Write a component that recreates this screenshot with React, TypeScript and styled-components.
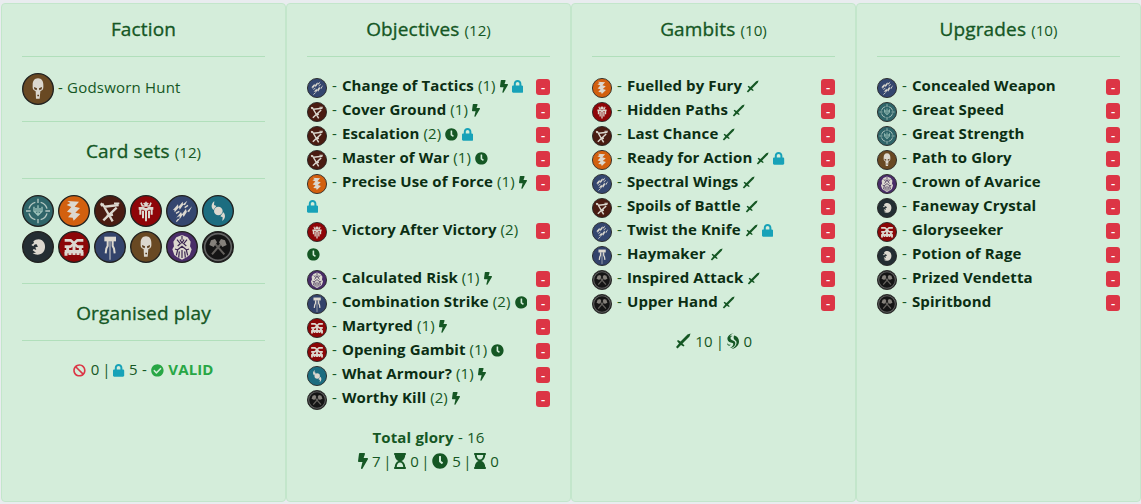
import React from 'react';
import styled, { createGlobalStyle } from 'styled-components';
import {
  FaBan,
  FaBolt,
  FaCheckCircle,
  FaClock,
  FaHourglassEnd,
  FaHourglassStart,
  FaLock,
} from 'react-icons/fa';

type EmblemName =
  | 'compass'
  | 'zigzag'
  | 'bones'
  | 'totem'
  | 'storm'
  | 'swirl'
  | 'moon'
  | 'ork'
  | 'squid'
  | 'skull'
  | 'beard'
  | 'axes';

type Mark = 'bolt' | 'clock' | 'sword' | 'lock';

interface Card {
  set: EmblemName;
  name: string;
  glory?: number;
  marks?: Mark[];
}

const cardSets: EmblemName[] = [
  'compass', 'zigzag', 'bones', 'totem', 'storm', 'swirl',
  'moon', 'ork', 'squid', 'skull', 'beard', 'axes',
];

const objectives: Card[] = [
  { set: 'storm', name: 'Change of Tactics', glory: 1, marks: ['bolt', 'lock'] },
  { set: 'bones', name: 'Cover Ground', glory: 1, marks: ['bolt'] },
  { set: 'bones', name: 'Escalation', glory: 2, marks: ['clock', 'lock'] },
  { set: 'bones', name: 'Master of War', glory: 1, marks: ['clock'] },
  { set: 'zigzag', name: 'Precise Use of Force', glory: 1, marks: ['bolt', 'lock'] },
  { set: 'totem', name: 'Victory After Victory', glory: 2, marks: ['clock'] },
  { set: 'beard', name: 'Calculated Risk', glory: 1, marks: ['bolt'] },
  { set: 'squid', name: 'Combination Strike', glory: 2, marks: ['clock'] },
  { set: 'ork', name: 'Martyred', glory: 1, marks: ['bolt'] },
  { set: 'ork', name: 'Opening Gambit', glory: 1, marks: ['clock'] },
  { set: 'swirl', name: 'What Armour?', glory: 1, marks: ['bolt'] },
  { set: 'axes', name: 'Worthy Kill', glory: 2, marks: ['bolt'] },
];

const gambits: Card[] = [
  { set: 'zigzag', name: 'Fuelled by Fury', marks: ['sword'] },
  { set: 'totem', name: 'Hidden Paths', marks: ['sword'] },
  { set: 'bones', name: 'Last Chance', marks: ['sword'] },
  { set: 'zigzag', name: 'Ready for Action', marks: ['sword', 'lock'] },
  { set: 'storm', name: 'Spectral Wings', marks: ['sword'] },
  { set: 'bones', name: 'Spoils of Battle', marks: ['sword'] },
  { set: 'storm', name: 'Twist the Knife', marks: ['sword', 'lock'] },
  { set: 'squid', name: 'Haymaker', marks: ['sword'] },
  { set: 'axes', name: 'Inspired Attack', marks: ['sword'] },
  { set: 'axes', name: 'Upper Hand', marks: ['sword'] },
];

const upgrades: Card[] = [
  { set: 'storm', name: 'Concealed Weapon' },
  { set: 'compass', name: 'Great Speed' },
  { set: 'compass', name: 'Great Strength' },
  { set: 'skull', name: 'Path to Glory' },
  { set: 'beard', name: 'Crown of Avarice' },
  { set: 'moon', name: 'Faneway Crystal' },
  { set: 'ork', name: 'Gloryseeker' },
  { set: 'moon', name: 'Potion of Rage' },
  { set: 'axes', name: 'Prized Vendetta' },
  { set: 'axes', name: 'Spiritbond' },
];

const bone = '#dcd8cf';

const emblems: Record<EmblemName, { fill: string; art: React.ReactNode }> = {
  compass: {
    fill: '#2f6569',
    art: (
      <g stroke="#b5c8c2" fill="none" strokeWidth="4">
        <path d="M40 22a27 27 0 0 0-19 19M56 22a27 27 0 0 1 19 19M21 55a27 27 0 0 0 19 19M75 55a27 27 0 0 1-19 19" />
        <path d="M48 11v13M48 72v13M12 48h14M70 48h14" />
        <path d="M48 31v30M36 35v14l12 12 12-12V35M42 39v12M54 39v12" stroke="#9fc4bc" />
      </g>
    ),
  },
  zigzag: {
    fill: '#d2600f',
    art: <path fill={bone} d="M28 18l35 2-13 15 16 4-14 14 15 4-20 20-3-9-14-1 11-13-14-4 13-14-14-6 11-6z" />,
  },
  bones: {
    fill: '#4a1c12',
    art: (
      <g stroke={bone} fill="none" strokeWidth="7">
        <path d="M20 25l12 10 42-5M31 36l25 43M68 38L28 76M38 63l19-4" />
        <path d="M60 25h16M21 33l8-7" strokeWidth="5" />
      </g>
    ),
  },
  totem: {
    fill: '#8f0508',
    art: (
      <g stroke={bone} fill="none" strokeWidth="5">
        <path d="M33 23l4 10h22l4-10M48 20v15M41 24l7 7 7-7" />
        <path d="M26 40h14l8 5 8-5h14" strokeWidth="8" />
        <path d="M31 42v17M39 47v23M48 47v32M57 47v23M65 42v17" strokeWidth="6" />
      </g>
    ),
  },
  storm: {
    fill: '#34466f',
    art: (
      <g fill={bone}>
        <path d="M20 46l16-18 1 8 13-16 1 8 13-11-7 14-5-2-11 15-2-7-13 15-1-8z" />
        <path d="M31 68l14-17 3 7 12-17 2 9 16-16-9 18-5-3-11 17-3-7-10 15 1-11z" />
        <path d="M30 55l10-6M56 38l10-7M38 72l-7 8" stroke={bone} strokeWidth="4" />
      </g>
    ),
  },
  swirl: {
    fill: '#1c6d80',
    art: (
      <g fill={bone}>
        <circle cx="49" cy="48" r="13" />
        <path d="M37 19l-1 11 7 3-9 12c-8-8-6-20 3-26zM61 78l1-11-7-3 9-12c8 8 6 20-3 26z" />
      </g>
    ),
  },
  moon: {
    fill: '#242e33',
    art: (
      <path
        fill={bone}
        d="M34 31c7-7 18-9 26-3 11 8 12 26 4 35-8 9-22 11-32 3l10-1-10-7 3-4 8 3-3-8 8-2-5-8-6 2-3 5-6-4 8-6z"
      />
    ),
  },
  ork: {
    fill: '#8c0708',
    art: (
      <g stroke={bone} fill="none">
        <path d="M20 28h18l10 9 10-9h18M20 47h17l11-9 11 9h17" strokeWidth="8" />
        <path d="M29 49v10M48 40v18M67 49v10" strokeWidth="9" />
        <path d="M20 62h56" strokeWidth="10" />
        <path d="M24 64v10M36 64v8M48 64v8M60 64v8M72 64v10" strokeWidth="9" />
      </g>
    ),
  },
  squid: {
    fill: '#33436b',
    art: (
      <g>
        <path fill={bone} d="M31 17h35v14H31z" />
        <path d="M41 30v15l-4 8-2 14M56 30v15l4 8 2 14" stroke={bone} fill="none" strokeWidth="6" />
        <path d="M48 30v56" stroke="#aeb1b8" strokeWidth="4" />
      </g>
    ),
  },
  skull: {
    fill: '#694923',
    art: (
      <g>
        <path fill={bone} d="M48 16c11 0 16 9 16 19 0 7 1 12-3 16l-6 4-2 22H42l-1-22-6-4c-4-4-3-9-3-16 0-10 5-19 16-19z" />
        <path fill="#5a3c1c" d="M36 42l9 4-1 6-7-3zM60 42l-9 4 1 6 7-3zM46 65h5v5h-5z" />
      </g>
    ),
  },
  beard: {
    fill: '#492d68',
    art: (
      <g>
        <path fill={bone} d="M31 19l17-7 17 7 9 13-2 14 5 9-6 17-9 7-14 7-14-7-9-7-6-17 5-9-2-14z" />
        <path
          d="M48 14v12M33 26l10 12-8 7M63 26L53 38l8 7M42 26l6 10 6-10M34 57l14-11 14 11M27 54l8 3-4 16M69 54l-8 3 4 16M40 61l-2 19M48 57v24M56 61l2 19"
          stroke="#37224f"
          strokeWidth="3.5"
          fill="none"
        />
      </g>
    ),
  },
  axes: {
    fill: '#151515',
    art: (
      <g>
        <circle cx="48" cy="48" r="40" fill="none" stroke="#626262" strokeWidth="5" />
        <path d="M37 36l30 34M59 36L30 70" stroke="#64615d" strokeWidth="6" />
        <path fill="#85817b" d="M22 42l5-14 12-4 6 10-10 14zM74 42l-5-14-12-4-6 10 10 14z" />
      </g>
    ),
  },
};

const Emblem = ({ name, size }: { name: EmblemName; size: number }) => (
  <EmblemSvg $size={size} viewBox="0 0 96 96">
    <circle cx="48" cy="48" r="46" fill={emblems[name].fill} stroke="#20211f" strokeWidth="4" />
    {emblems[name].art}
  </EmblemSvg>
);

const Sword = ({ size }: { size: number }) => (
  <svg width={size} height={size} viewBox="0 0 32 32" fill="currentColor">
    <path d="M31 1l-2 6-14 14 4 4-2 2-5-3-7 7-3-3 6-7-4-5 2-2 5 3L25 3z" />
  </svg>
);

const Whirl = () => (
  <svg width="12" height="16" viewBox="0 0 24 32" fill="currentColor">
    <path d="M14 0C5 2 0 7 1 13c1 5 5 6 10 7 3 1 2 6-5 10 9-1 12-7 10-12-2-4-9-3-9-8 0-2 2-4 4-4-2-1-4 0-6 2C6 5 9 2 14 0z" />
    <path d="M14 5c6 1 10 6 10 12 0 8-7 14-15 15 7-4 11-9 10-14-1-4-8-4-5-13z" />
    <path d="M0 19c1 4 4 5 8 4-2 4-8 3-8-4z" />
  </svg>
);

const CardList = ({ cards }: { cards: Card[] }) => (
  <List>
    {cards.map(card => (
      <Row key={card.name}>
        <RowText>
          <Emblem name={card.set} size={20} />
          {' '}<Dash>-</Dash>{' '}
          <CardName>{card.name}</CardName>
          {card.glory && <Count>{` (${card.glory})`}</Count>}
          {card.marks?.map(mark => (
            <React.Fragment key={mark}>
              {' '}
              <MarkIcon $info={mark === 'lock'}>{markIcons[mark]}</MarkIcon>
            </React.Fragment>
          ))}
        </RowText>
        <RemoveButton>-</RemoveButton>
      </Row>
    ))}
  </List>
);

const App = () => {
  return (
    <>
      <GlobalStyle />
      <Deck>
        <Panel>
          <Title>Faction</Title>
          <Divider />
          <Faction>
            <Emblem name="skull" size={32} />
            <FactionName>- Godsworn Hunt</FactionName>
          </Faction>
          <Divider />
          <Title>Card sets <small>(12)</small></Title>
          <Divider />
          <SetGrid>
            {cardSets.map(name => <Emblem key={name} name={name} size={32} />)}
          </SetGrid>
          <Divider />
          <Title>Organised play</Title>
          <Divider />
          <Summary $spacing={0.35}>
            <Tone $color="#dc3545"><FaBan /></Tone> 0 <Pipe>|</Pipe> <Tone $color="#17a2b8"><Lock /></Tone> 5 -{' '}
            <Tone $color="#28a745"><FaCheckCircle /></Tone> <Valid>VALID</Valid>
          </Summary>
        </Panel>
        <Panel>
          <Title>Objectives <small>(12)</small></Title>
          <Divider />
          <CardList cards={objectives} />
          <Summary $spacing={0.25}><b>Total glory</b> - 16</Summary>
          <Summary $large>
            <Bolt /> 7 <Pipe>|</Pipe> <HourglassStart /> 0 <Pipe>|</Pipe> <FaClock /> 5 <Pipe>|</Pipe>{' '}
            <HourglassEnd /> 0
          </Summary>
        </Panel>
        <Panel>
          <Title>Gambits <small>(10)</small></Title>
          <Divider />
          <CardList cards={gambits} />
          <Summary $large $spacing={0.5}>
            <Sword size={16} /> 10 <Pipe>|</Pipe> <Whirl /> 0
          </Summary>
        </Panel>
        <Panel>
          <Title>Upgrades <small>(10)</small></Title>
          <Divider />
          <CardList cards={upgrades} />
        </Panel>
      </Deck>
    </>
  );
};

export default App;

const GlobalStyle = createGlobalStyle`
  * {
    box-sizing: border-box;
  }

  body {
    margin: 0;
    background: #e9ecef;
    color: #155724;
    font-family: "Open Sans", "Noto Sans", sans-serif;
    font-size: 15px;
    letter-spacing: 0.1px;
    line-height: 24px;
    overflow: hidden;
  }
`;

// react-icons boxes are square, these glyphs are narrower
const Bolt = styled(FaBolt)`
  width: 0.625em;
`;

const Lock = styled(FaLock)`
  width: 0.875em;
`;

const HourglassStart = styled(FaHourglassStart)`
  width: 0.75em;
`;

const HourglassEnd = styled(FaHourglassEnd)`
  width: 0.75em;
`;

const markIcons: Record<Mark, React.ReactNode> = {
  bolt: <Bolt />,
  clock: <FaClock />,
  sword: <Sword size={13} />,
  lock: <Lock />,
};

const Deck = styled.div`
  display: grid;
  grid-template-columns: repeat(4, 285px);
  height: 504px;
  padding: 3px 0 2px 1px;
`;

const Panel = styled.section`
  padding: 12px 20px;
  background: #d4edda;
  border: 1px solid #c3e6cb;
  border-radius: 4px;
`;

const Title = styled.h5`
  height: 24px;
  margin: 0;
  font-size: 19px;
  font-weight: 500;
  line-height: 27px;
  letter-spacing: 0.15px;
  text-align: center;
  -webkit-text-stroke: 0.35px currentColor;

  small {
    font-size: 15.2px;
    font-weight: 400;
    letter-spacing: 0;
    -webkit-text-stroke: 0;
  }
`;

const Divider = styled.hr`
  margin: 16px 0;
  border: 0;
  border-top: 1px solid #b1dfbb;
`;

const Faction = styled.div`
  display: flex;
  align-items: center;
  gap: 4px;
  height: 32px;
`;

const FactionName = styled.span`
  padding-bottom: 4px;
  letter-spacing: 0.2px;
`;

const SetGrid = styled.div`
  display: flex;
  flex-wrap: wrap;
  gap: 4px;
  margin-bottom: 20px;
`;

const EmblemSvg = styled.svg<{ $size: number }>`
  width: ${({ $size }) => $size}px;
  height: ${({ $size }) => $size}px;
  flex: none;
  vertical-align: -1px;
`;

const List = styled.div`
  margin-bottom: 16px;
`;

const Row = styled.div`
  display: flex;
  align-items: flex-start;
`;

const RowText = styled.div`
  width: 229px;
  padding-right: 4px;

  ${EmblemSvg} {
    margin: -3px 0 -6px;
  }
`;

const Dash = styled.span`
  padding: 0 1px;
`;

const CardName = styled.span`
  color: #0b2e13;
  font-weight: 700;
`;

const Count = styled.span`
  font-weight: 400;
`;

const MarkIcon = styled.span<{ $info?: boolean }>`
  color: ${({ $info }) => ($info ? '#17a2b8' : '#155724')};
  font-size: 12.8px;
  line-height: 1;

  svg {
    vertical-align: -2px;
  }
`;

const RemoveButton = styled.button`
  width: 14px;
  height: 16px;
  margin: 6px 0 0;
  padding: 0;
  border: 0;
  border-radius: 3px;
  background: #dc3545;
  color: #fff;
  font: 600 13px/17px "Open Sans", sans-serif;
`;

const Summary = styled.div<{ $large?: boolean; $spacing?: number }>`
  height: 24px;
  text-align: center;
  white-space: nowrap;
  word-spacing: ${({ $spacing = 0 }) => $spacing}px;

  svg {
    font-size: ${({ $large }) => ($large ? '16px' : '12.8px')};
    vertical-align: -2px;
  }
`;

const Pipe = styled.span`
  margin: 0 -1.5px;
`;

const Tone = styled.span<{ $color: string }>`
  color: ${({ $color }) => $color};
`;

const Valid = styled.b`
  color: #28a745;
`;
